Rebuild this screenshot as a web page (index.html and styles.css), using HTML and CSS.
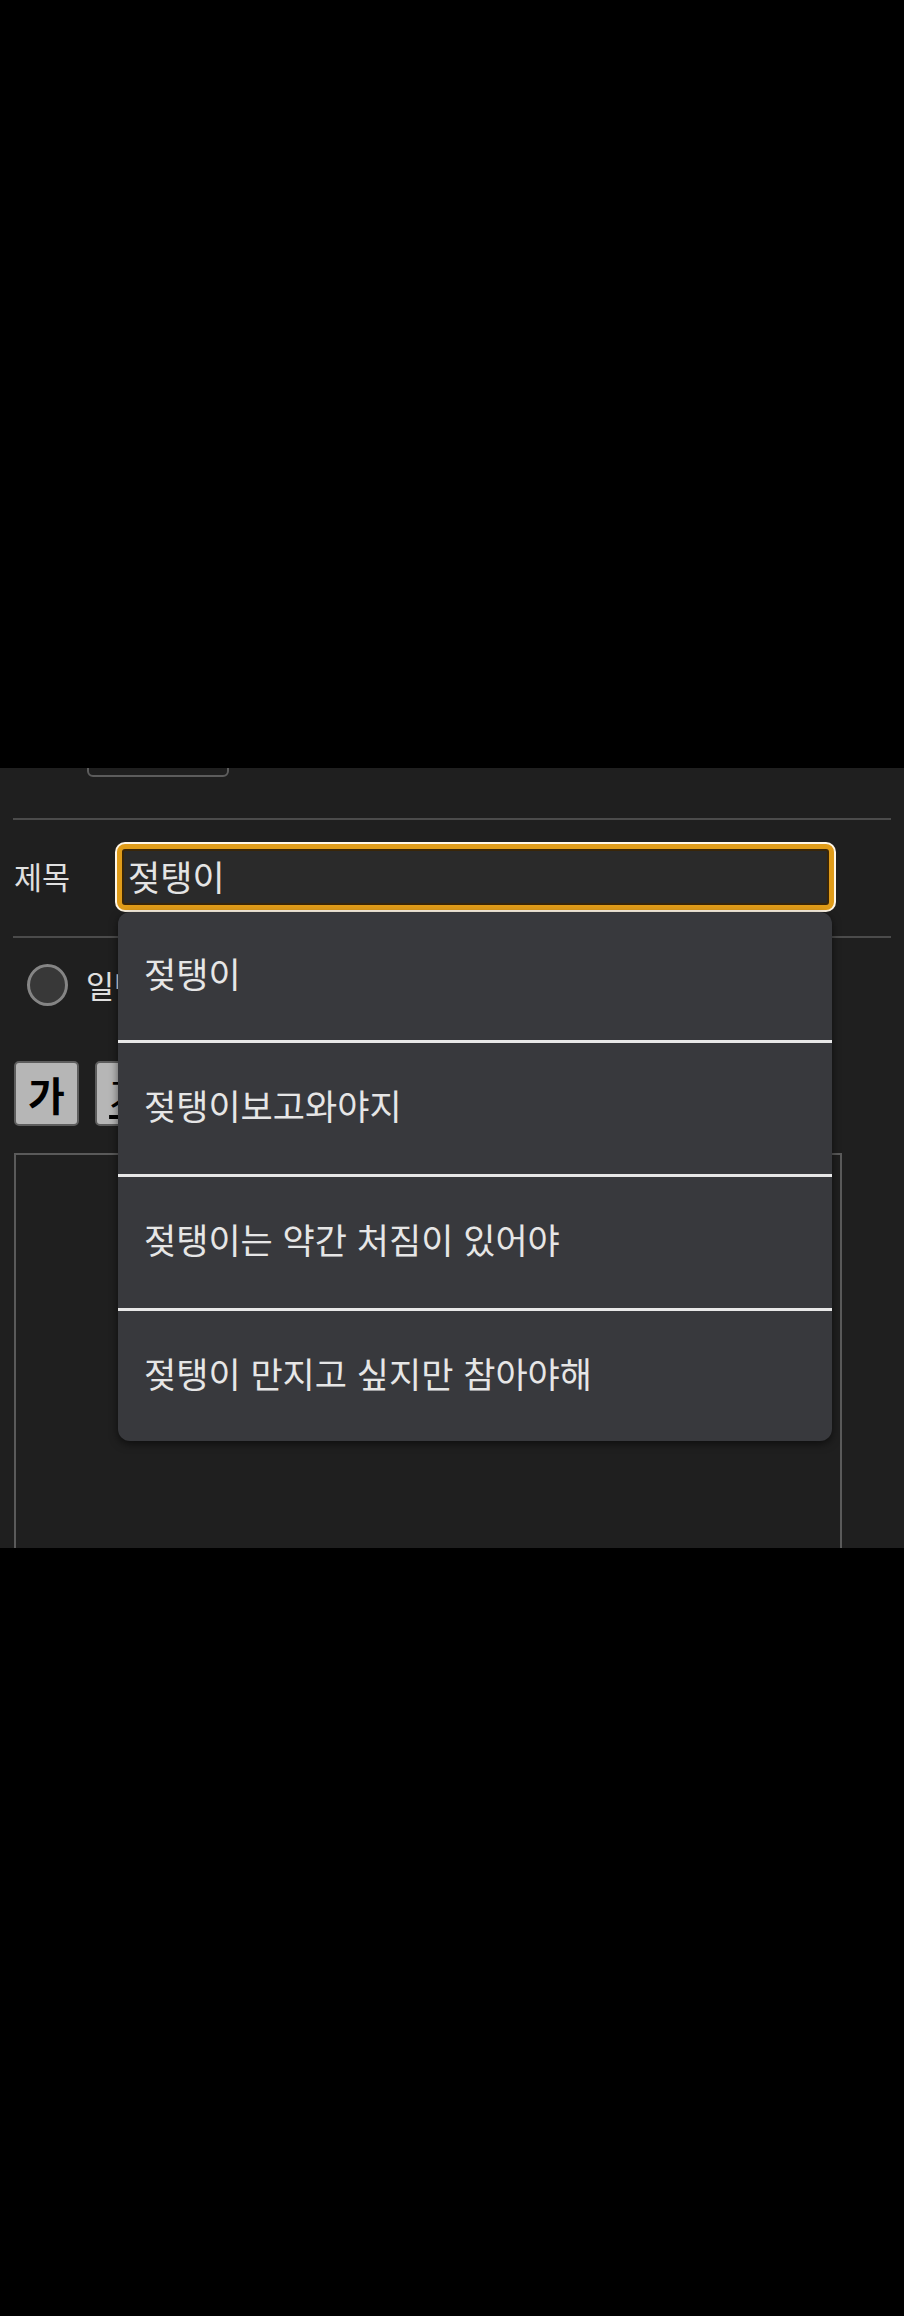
FILE: index.html
```html
<!DOCTYPE html>
<html lang="ko">
<head>
<meta charset="utf-8">
<title>글쓰기</title>
<link rel="stylesheet" href="styles.css">
</head>
<body>
<div class="blackout"></div>
<main class="screen">
  <div class="toolbar">
    <button class="ghost-btn" type="button"></button>
  </div>
  <hr class="rule">
  <div class="field-row">
    <label class="field-label" for="title">제목</label>
    <div class="input-wrap">
      <div class="input" id="title">젖탱이</div>
      <ul class="suggest">
        <li class="suggest-item">젖탱이</li>
        <li class="suggest-item">젖탱이보고와야지</li>
        <li class="suggest-item">젖탱이는 약간 처짐이 있어야</li>
        <li class="suggest-item">젖탱이 만지고 싶지만 참아야해</li>
      </ul>
    </div>
  </div>
  <hr class="rule">
  <div class="radio-row">
    <span class="radio"></span>
    <span class="radio-label">일반</span>
  </div>
  <div class="format-row">
    <button class="fmt fmt-bold" type="button">가</button>
    <button class="fmt fmt-under" type="button">가</button>
  </div>
  <div class="editor"></div>
</main>
<div class="blackout blackout-bottom"></div>
</body>
</html>
```
FILE: styles.css
```css
* { box-sizing: border-box; }

html, body {
  margin: 0;
  padding: 0;
  background: #000;
}

body {
  width: 904px;
  font-family: "Noto Sans CJK KR", "Noto Sans", sans-serif;
  color: #e2e2e2;
}

.blackout {
  height: 768px;
  background: #000;
}

.blackout-bottom {
  height: 768px;
}

.screen {
  height: 780px;
  background: #1f1f1f;
  padding: 0 13px;
  overflow: hidden;
  display: flex;
  flex-direction: column;
}

.toolbar {
  height: 9px;
  flex: none;
}

.ghost-btn {
  display: block;
  width: 142px;
  height: 60px;
  margin: -51px 0 0 74px;
  background: transparent;
  border: 2px solid #5c5c5c;
  border-radius: 6px;
}

.rule {
  flex: none;
  height: 2px;
  margin: 41px 0 0;
  border: 0;
  background: #4b4b4b;
}

.rule + .radio-row { margin-top: 26px; }

.field-row {
  flex: none;
  display: grid;
  grid-template-columns: 104px 717px;
  align-items: center;
  margin-top: 22px;
  padding: 2px 0;
}

.field-row + .rule { margin-top: 24px; }

.field-label {
  font-size: 30.5px;
  line-height: 1;
  padding: 0 0 2px 1px;
  color: #e0e0e0;
}

.input-wrap {
  position: relative;
}

.input {
  height: 66px;
  display: flex;
  align-items: center;
  padding: 0 0 4px 6px;
  font-size: 35px;
  color: #e4e4e4;
  background: #2a2a2a;
  border: 5px solid #e09c19;
  border-radius: 8px;
  box-shadow: 0 0 0 2px #fff6e6, inset 0 0 0 2px #3a2608;
}

.suggest {
  position: absolute;
  top: calc(100% + 2px);
  left: 1px;
  right: 2px;
  margin: 0;
  padding: 0;
  list-style: none;
  background: #38393d;
  border-radius: 12px;
  overflow: hidden;
  box-shadow: 0 3px 8px rgba(0, 0, 0, 0.55);
  z-index: 2;
}

.suggest-item {
  height: 134px;
  display: flex;
  align-items: center;
  padding: 0 0 8px 26px;
  font-size: 35px;
  color: #e6e6e6;
  border-top: 3px solid #e8e8e8;
}

.suggest-item:first-child {
  height: 128px;
  border-top: 0;
}

.suggest-item:last-child {
  height: 133px;
}

.radio-row {
  flex: none;
  display: flex;
  align-items: center;
  gap: 18px;
  height: 42px;
  padding-left: 14px;
}

.radio {
  width: 41px;
  height: 42px;
  border-radius: 50%;
  border: 3px solid #858585;
  background: #383838;
}

.radio-label {
  font-size: 30.5px;
  color: #e0e0e0;
}

.format-row {
  flex: none;
  display: flex;
  gap: 16px;
  margin-top: 55px;
  padding-left: 1px;
}

.fmt {
  width: 65px;
  height: 65px;
  padding: 0;
  background: #b6b6b6;
  border: 2px solid #5d5d5d;
  border-radius: 5px;
  font-family: "Noto Sans CJK KR", sans-serif;
  font-size: 40px;
  line-height: 1;
  color: #000;
}

.fmt-bold { font-weight: 700; }

.fmt-under {
  font-weight: 400;
  text-decoration: underline;
  text-underline-offset: 4px;
}

.editor {
  flex: none;
  width: 828px;
  height: 500px;
  margin: 27px 0 0 1px;
  border: 2px solid #5a5a5a;
  border-bottom: 0;
}
```
